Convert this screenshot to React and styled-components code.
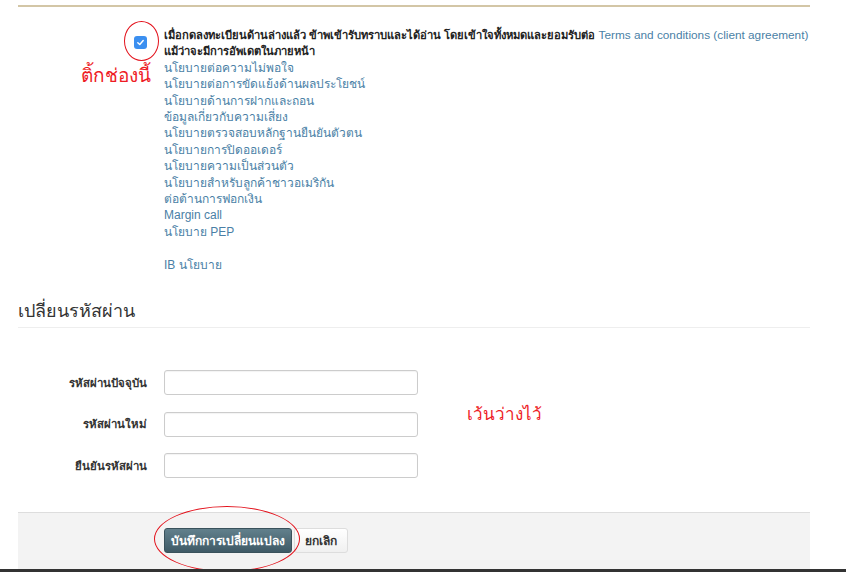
import React from 'react'
import styled, { createGlobalStyle } from 'styled-components'

const Global = createGlobalStyle`
  html, body {
    margin: 0;
    padding: 0;
    background: #fff;
  }
  body {
    font-family: 'Liberation Sans', 'Noto Sans', sans-serif;
    color: #333;
  }
`

const Page = styled.div`
  position: relative;
  width: 846px;
  height: 572px;
  overflow: hidden;
`

const Wrap = styled.div`
  width: 792px;
  margin-left: 18px;
  padding-top: 5px;
`

const TopRule = styled.div`
  height: 2px;
  background: #d3c6a6;
`

const Agreement = styled.div`
  display: grid;
  grid-template-columns: 146px 1fr;
  margin-top: 20px;
`

const CheckCell = styled.div`
  display: flex;
  justify-content: flex-end;
  padding-right: 17px;
  padding-top: 9px;
`

const Check = styled.span`
  width: 13px;
  height: 13px;
  border-radius: 3px;
  background: #3b8ff0;
  display: flex;
  align-items: center;
  justify-content: center;
`

const Text = styled.div`
  font-size: 12px;
  line-height: 16.4px;
`

const Strong = styled.span`
  font-weight: bold;
  font-size: 11.2px;
  color: #222;
`

const FirstLine = styled.div`
  white-space: nowrap;
`

const Link = styled.a`
  display: ${p => (p.$block ? 'block' : 'inline')};
  color: #4a7fa6;
  font-size: ${p => (p.$small ? 11.8 : 12)}px;
  text-decoration: none;
  font-weight: normal;
`

const Blank = styled.div`
  height: 16.4px;
`

const Note = styled.div`
  position: absolute;
  color: #ee1c25;
  font-size: ${p => p.$size}px;
  white-space: nowrap;
  left: ${p => p.$x}px;
  top: ${p => p.$y}px;
`

const Ring = styled.div`
  position: absolute;
  border: 1px solid #e3121c;
  border-radius: 50%;
  left: ${p => p.$x}px;
  top: ${p => p.$y}px;
  width: ${p => p.$w}px;
  height: ${p => p.$h}px;
  pointer-events: none;
`

const Heading = styled.h3`
  margin: 26px 0 0;
  font-size: 18px;
  font-weight: normal;
  color: #333;
  line-height: 24px;
  padding-bottom: 4px;
  border-bottom: 1px solid #eee;
`

const Form = styled.div`
  display: flex;
  flex-direction: column;
  gap: 16.5px;
  margin-top: 42px;
`

const Row = styled.div`
  display: grid;
  grid-template-columns: 129px 254px;
  column-gap: 17px;
  align-items: center;
`

const Label = styled.label`
  text-align: right;
  font-size: 11.4px;
  font-weight: bold;
  color: #333;
`

const Input = styled.input`
  height: 25px;
  box-sizing: border-box;
  border: 1px solid #ccc;
  border-radius: 3px;
  background: #fff;
  box-shadow: inset 0 1px 1px rgba(0,0,0,0.05);
`

const Footer = styled.div`
  margin-top: 34px;
  height: 57px;
  box-sizing: border-box;
  background: #f3f3f3;
  border-top: 1px solid #ddd;
  display: flex;
  align-items: flex-start;
  gap: 2px;
  padding: 15px 0 0 146px;
`

const Button = styled.button`
  height: 25px;
  padding: 0 ${p => (p.$primary ? 6 : 10)}px;
  border-radius: 3px;
  font-family: inherit;
  font-size: 12px;
  font-weight: bold;
  cursor: pointer;
  color: ${p => (p.$primary ? '#fff' : '#333')};
  border: 1px solid ${p => (p.$primary ? '#3a525c' : '#ddd')};
  background: ${p =>
    p.$primary
      ? 'linear-gradient(#62808c, #3f5a66)'
      : 'linear-gradient(#fff, #f0f0f0)'};
`

const BottomBar = styled.div`
  position: absolute;
  left: 0;
  right: 0;
  bottom: 0;
  height: 3px;
  background: #333;
`

const links = [
  'นโยบายต่อความไม่พอใจ',
  'นโยบายต่อการขัดแย้งด้านผลประโยชน์',
  'นโยบายด้านการฝากและถอน',
  'ข้อมูลเกี่ยวกับความเสี่ยง',
  'นโยบายตรวจสอบหลักฐานยืนยันตัวตน',
  'นโยบายการปิดออเดอร์',
  'นโยบายความเป็นส่วนตัว',
  'นโยบายสำหรับลูกค้าชาวอเมริกัน',
  'ต่อต้านการฟอกเงิน',
  'Margin call',
  'นโยบาย PEP'
]

const fields = ['รหัสผ่านปัจจุบัน', 'รหัสผ่านใหม่', 'ยืนยันรหัสผ่าน']

export default function App () {
  return (
    <Page>
      <Global />
      <Wrap>
        <TopRule />
        <Agreement>
          <CheckCell>
            <Check>
              <svg width='9' height='9' viewBox='0 0 10 10'>
                <path d='M2 5.2 L4.2 7.3 L8 2.8' stroke='#fff' strokeWidth='1.6' fill='none' strokeLinecap='round' strokeLinejoin='round' />
              </svg>
            </Check>
          </CheckCell>
          <Text>
            <FirstLine>
              <Strong>เมื่อกดลงทะเบียนด้านล่างแล้ว ข้าพเข้ารับทราบและได้อ่าน โดยเข้าใจทั้งหมดและยอมรับต่อ</Strong>{' '}
              <Link href='#' $small>Terms and conditions (client agreement)</Link>
            </FirstLine>
            <Strong>แม้ว่าจะมีการอัพเดตในภายหน้า</Strong>
            {links.map(l => (
              <Link key={l} href='#' $block>{l}</Link>
            ))}
            <Blank />
            <Link href='#' $block>IB นโยบาย</Link>
          </Text>
        </Agreement>

        <Heading>เปลี่ยนรหัสผ่าน</Heading>

        <Form>
          {fields.map(f => (
            <Row key={f}>
              <Label>{f}</Label>
              <Input type='password' />
            </Row>
          ))}
        </Form>

        <Footer>
          <Button $primary>บันทึกการเปลี่ยนแปลง</Button>
          <Button>ยกเลิก</Button>
        </Footer>
      </Wrap>

      <Ring $x={124} $y={21} $w={33} $h={38} />
      <Note $x={81} $y={60} $size={19}>ติ้กช่องนี้</Note>
      <Note $x={467} $y={400} $size={17}>เว้นว่างไว้</Note>
      <Ring $x={154} $y={506} $w={144} $h={64} />
      <BottomBar />
    </Page>
  )
}
